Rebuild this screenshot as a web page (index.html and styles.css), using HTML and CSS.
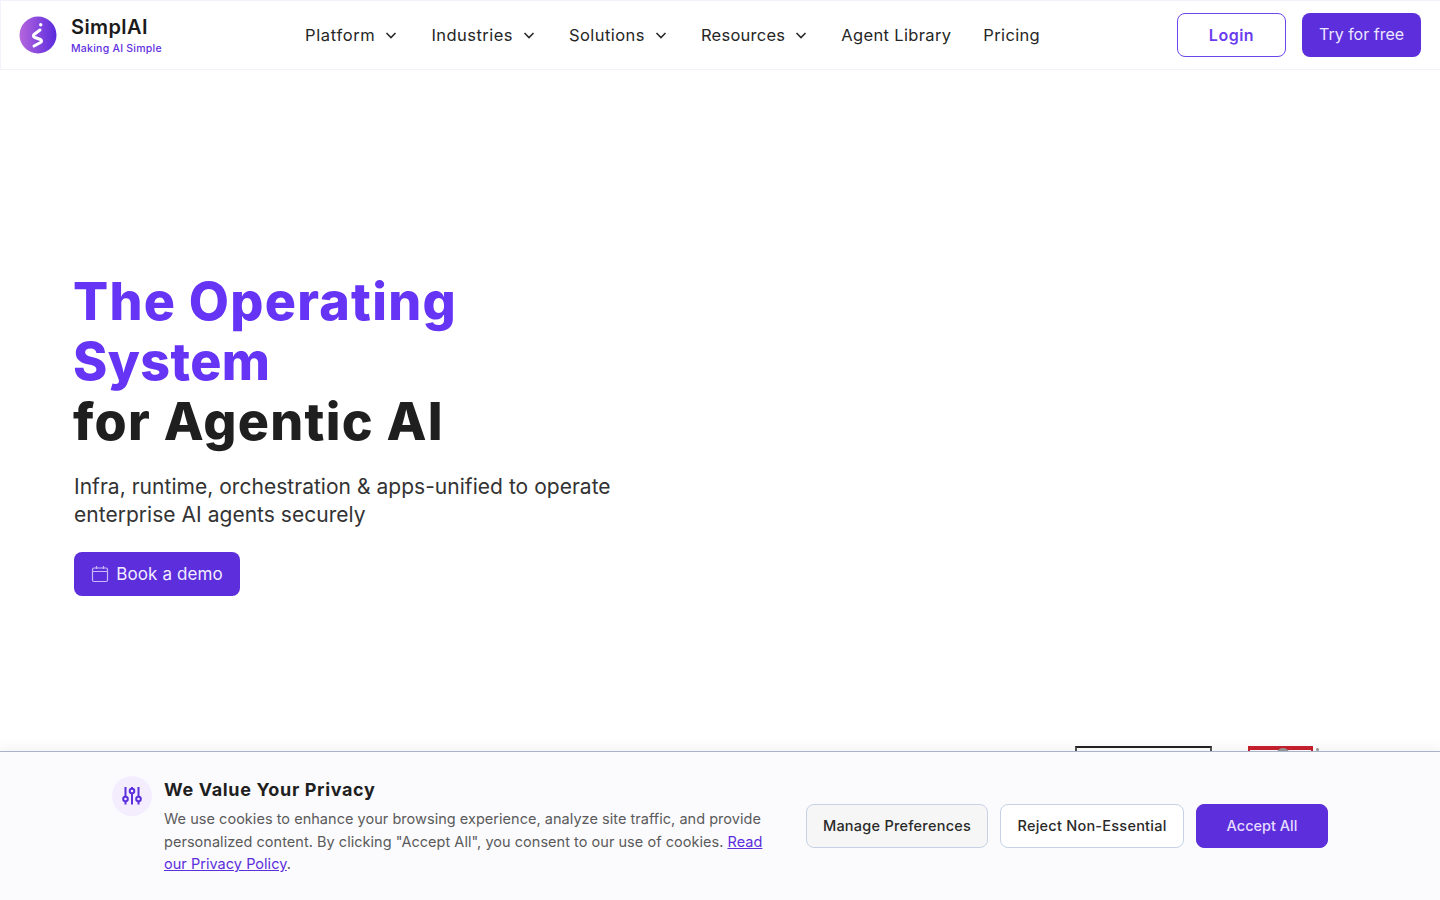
FILE: index.html
```html
<!DOCTYPE html>
<html lang="en">
<head>
<meta charset="utf-8">
<title>SimplAI</title>
<link rel="stylesheet" href="styles.css">
</head>
<body>
<header class="nav">
  <a class="brand" href="#">
    <svg class="brand-mark" viewBox="0 0 38 38" width="38" height="38" aria-hidden="true">
      <defs><linearGradient id="lg" x1="0" y1="0" x2="1" y2="0"><stop offset="0" stop-color="#b566dd"/><stop offset="1" stop-color="#5b2bdd"/></linearGradient></defs>
      <circle cx="19" cy="19" r="18.5" fill="url(#lg)"/>
      <circle cx="21.7" cy="8.7" r="1.7" fill="#fff"/>
      <path d="M21 14 L15 18.5 Q13.5 20.5 16 21.5 L21.5 23.5 Q23.5 25 21.5 26.5 L15 30" fill="none" stroke="#fff" stroke-width="3" stroke-linecap="round" stroke-linejoin="round"/>
    </svg>
    <span class="brand-text"><span class="brand-name">SimplAI</span><span class="brand-tag">Making AI Simple</span></span>
  </a>
  <nav class="menu">
    <a class="menu-item menu-platform">Platform<svg class="chev" viewBox="0 0 12 12"><path d="M1.5 4 L6 8.5 L10.5 4"/></svg></a>
    <a class="menu-item menu-mid">Industries<svg class="chev" viewBox="0 0 12 12"><path d="M1.5 4 L6 8.5 L10.5 4"/></svg></a>
    <a class="menu-item menu-mid">Solutions<svg class="chev" viewBox="0 0 12 12"><path d="M1.5 4 L6 8.5 L10.5 4"/></svg></a>
    <a class="menu-item menu-resources">Resources<svg class="chev" viewBox="0 0 12 12"><path d="M1.5 4 L6 8.5 L10.5 4"/></svg></a>
    <a class="menu-item">Agent Library</a>
    <a class="menu-item">Pricing</a>
  </nav>
  <div class="nav-actions">
    <a class="btn btn-login">Login</a>
    <a class="btn btn-try">Try for free</a>
  </div>
</header>
<main class="hero">
  <h1 class="hero-title"><span class="accent">The Operating<br><span class="hero-system">System</span></span><br>for Agentic AI</h1>
  <p class="hero-sub">Infra, runtime, orchestration &amp; apps-unified to operate<br>enterprise AI agents securely</p>
  <a class="btn btn-demo">
    <svg class="cal" viewBox="0 0 18 18" width="18" height="18"><rect x="1.5" y="3" width="15" height="13.5" rx="1.5"/><path d="M1.5 6.5 H16.5 M5.5 1 V4 M12.5 1 V4"/></svg>
    Book a demo
  </a>
</main>
<div class="logos">
  <div class="logo-box"></div>
  <div class="logo-red"><span class="logo-seal"></span><span class="logo-dot"></span></div>
</div>
<aside class="cookie">
  <div class="cookie-main">
    <span class="cookie-icon">
      <svg viewBox="0 0 24 24" width="24" height="24"><path d="M5.5 3 V12.5 M5.5 17.5 V20.5 M12 3 V4.5 M12 9.5 V20.5 M18.5 3 V12.5 M18.5 17.5 V20.5"/><circle cx="5.5" cy="15" r="2.3"/><circle cx="12" cy="7" r="2.3"/><circle cx="18.5" cy="15" r="2.3"/></svg>
    </span>
    <div class="cookie-copy">
      <h2 class="cookie-title">We Value Your Privacy</h2>
      <p class="cookie-text">We use cookies to enhance your browsing experience, analyze site traffic, and provide<br>personalized content. By clicking "Accept All", you consent to our use of cookies. <a class="cookie-link">Read<br>our Privacy Policy</a>.</p>
    </div>
  </div>
  <div class="cookie-actions">
    <a class="cbtn cbtn-manage">Manage Preferences</a>
    <a class="cbtn cbtn-reject">Reject Non-Essential</a>
    <a class="cbtn cbtn-accept">Accept All</a>
  </div>
</aside>
</body>
</html>
```
FILE: styles.css
```css
* { box-sizing: border-box; }
html, body { margin: 0; padding: 0; }
body {
  width: 1440px;
  height: 900px;
  overflow: hidden;
  position: relative;
  background: #fff;
  color: #1f1f1f;
  font-family: "Inter", "Liberation Sans", sans-serif;
}
.nav {
  height: 70px;
  display: flex;
  align-items: center;
  padding: 0 19px 0 18px;
  border: 1px solid #f3f2fc;
  border-right: 0;
  background: #fff;
}
.brand { display: flex; align-items: center; gap: 14px; width: 286px; flex: none; text-decoration: none; }
.brand-mark { flex: none; }
.brand-text { display: flex; flex-direction: column; gap: 3px; }
.brand-name { font-size: 20px; line-height: 24px; font-weight: 600; letter-spacing: .4px; color: #1b1b1b; }
.brand-tag { font-size: 10.5px; line-height: 13px; font-weight: 500; letter-spacing: .25px; color: #5f2fe0; }
.menu { display: flex; align-items: center; gap: 32px; flex: 1; font-size: 16.5px; letter-spacing: .35px; color: #262626; }
.menu-item { display: flex; align-items: center; gap: 10px; line-height: 24px; }
.menu-platform { letter-spacing: .65px; }
.menu-mid { letter-spacing: .45px; }
.menu-resources { letter-spacing: .25px; }
.chev { width: 12px; height: 12px; margin-right: 2px; fill: none; stroke: #2a2a2a; stroke-width: 1.6; }
.nav-actions { display: flex; gap: 16px; }
.btn { display: inline-flex; align-items: center; justify-content: center; height: 44px; border-radius: 8px; font-size: 16px; }
.btn-login { width: 109px; border: 1px solid #6d46ea; color: #6a3cf0; font-weight: 600; letter-spacing: .5px; }
.btn-try { width: 119px; padding-bottom: 2px; background: #5c2edc; color: #ece6ff; }
.hero { padding: 202px 0 0 74px; }
.hero-title { margin: 0 0 0 -1px; font-size: 52px; line-height: 60px; font-weight: 800; letter-spacing: 1.25px; color: #1f1f1f; }
.accent { color: #6534f4; }
.hero-system { letter-spacing: .4px; }
.hero-sub { margin: 21px 0 23px; font-size: 21px; line-height: 28px; letter-spacing: .03px; color: #333; }
.btn-demo { width: 166px; gap: 7px; background: #5c2edc; color: #f1edff; font-size: 17px; letter-spacing: .1px; }
.cal { fill: none; stroke: #c9b8f7; stroke-width: 1.2; }
.logos { position: absolute; left: 1075px; top: 746px; display: flex; gap: 36px; }
.logo-box { width: 137px; height: 20px; border: 2px solid #222; border-left-color: #555; border-right-color: #555; background: #fff; }
.logo-red { width: 65px; height: 20px; border: 4px solid #c8202e; border-bottom: 0; border-left-width: 2px; border-right-width: 2px; background: #fff; position: relative; }
.logo-seal { position: absolute; left: 26px; top: -2px; width: 14px; height: 14px; border-radius: 50%; background: #999; }
.logo-dot { position: absolute; left: 66px; top: -2px; width: 3px; height: 3px; border-radius: 50%; background: #999; }
.cookie {
  position: absolute;
  left: 0; right: 0; bottom: 0;
  height: 149px;
  background: #fbfbfe;
  border-top: 1px solid #a9b4c8;
  box-shadow: 0 -4px 12px rgba(0,0,0,.05);
  padding: 24px 112px 0;
  display: flex;
  justify-content: space-between;
}
.cookie-main { display: flex; gap: 12px; flex: none; }
.cookie-icon { width: 40px; height: 40px; border-radius: 50%; background: #f3edfd; display: flex; align-items: center; justify-content: center; flex: none; }
.cookie-icon svg { fill: none; stroke: #5c2edc; stroke-width: 2; }
.cookie-title { margin: 0 0 4px; font-size: 18px; line-height: 28px; font-weight: 700; letter-spacing: .65px; color: #1f1f1f; }
.cookie-text { margin: 0; font-size: 14.5px; line-height: 22.5px; letter-spacing: .035px; color: #5a5a5a; }
.cookie-link { color: #5c2edc; text-decoration: underline; }
.cookie-actions { display: flex; gap: 12px; padding-top: 28px; }
.cbtn { display: flex; align-items: center; justify-content: center; height: 44px; padding-bottom: 1px; border-radius: 8px; font-size: 14.5px; font-weight: 500; letter-spacing: .24px; color: #2a2a2a; border: 1px solid #c6d2e4; }
.cbtn-manage { width: 182px; background: #f6f6f6; }
.cbtn-reject { width: 184px; background: #fff; }
.cbtn-accept { width: 132px; background: #5c2edc; border-color: #5c2edc; color: #e6dcff; letter-spacing: 0; }
```
